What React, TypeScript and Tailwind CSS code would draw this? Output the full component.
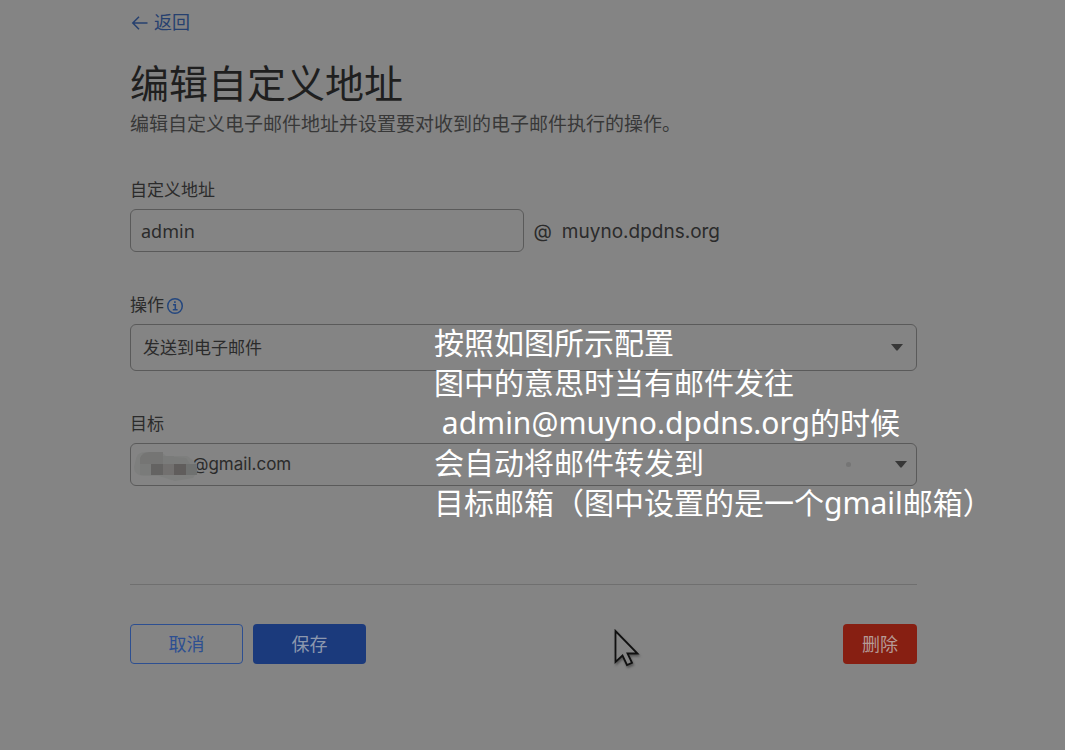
import React from "react";

const notes = [
  "按照如图所示配置",
  "图中的意思时当有邮件发往",
  " admin@muyno.dpdns.org的时候",
  "会自动将邮件转发到",
  "目标邮箱（图中设置的是一个gmail邮箱）",
];

function Caret() {
  return (
    <svg width="12" height="7" viewBox="0 0 12 7" fill="#373737" aria-hidden="true">
      <path d="M0 0h12L6.8 6.3q-.8.8-1.6 0z" />
    </svg>
  );
}

function App() {
  return (
    <div className="relative min-h-screen bg-[#848484] text-[#2b2b2b] font-[Inter,'Noto_Sans_CJK_SC',sans-serif]">
      <main className="ml-[130px] mr-[148px] pt-2.5 pb-20">
        <a href="#back" className="flex h-[26px] w-fit items-center gap-1.5 text-lg text-[#26406f]">
          <svg width="18" height="16" viewBox="0 0 18 16" fill="none" stroke="currentColor" strokeWidth="1.5" aria-hidden="true">
            <path d="M17.5 8H3M9 1.8 2.8 8 9 14.2" />
          </svg>
          返回
        </a>

        <h1 className="mt-5 text-[39px] leading-[56px] text-[#1f1f1f]">编辑自定义地址</h1>
        <p className="text-[19px] leading-[26px] whitespace-nowrap text-[#383838]">
          编辑自定义电子邮件地址并设置要对收到的电子邮件执行的操作。
        </p>

        {/* Form fields */}
        <form className="mt-[41px] flex flex-col gap-[42px]">
          <div>
            <label htmlFor="address" className="mb-1.5 flex h-6 items-center text-[17px]">
              自定义地址
            </label>
            <div className="flex items-baseline">
              <input
                id="address"
                type="text"
                defaultValue="admin"
                className="h-[43px] w-1/2 rounded-md border border-[#5a5a5a] px-2.5 font-['Noto_Sans'] text-lg"
              />
              <span className="ml-2.5 text-[19px]">@</span>
              <span className="ml-2.5 text-[19px]">muyno.dpdns.org</span>
            </div>
          </div>

          <div>
            <div className="mb-1.5 flex h-6 items-center text-[17px]">
              <label htmlFor="action">操作</label>
              <svg width="18" height="18" viewBox="0 0 18 18" fill="none" stroke="#24477f" strokeWidth="1.5" className="ml-0.5" aria-hidden="true">
                <circle cx="9" cy="9" r="7.3" />
                <path d="M7 7.8h2.3v5M6.8 12.8h4.8" />
                <path d="M8.1 5.1h1.6" strokeWidth="1.8" />
              </svg>
            </div>
            <div className="relative">
              <select
                id="action"
                className="h-[47px] w-full appearance-none rounded-md border border-[#5a5a5a] px-3 pt-0.5 text-[17px]"
              >
                <option>发送到电子邮件</option>
              </select>
              <span className="pointer-events-none absolute inset-y-0 right-3.5 flex items-center">
                <Caret />
              </span>
            </div>
          </div>

          <div>
            <label htmlFor="target" className="mb-1.5 flex h-6 items-center text-[17px]">
              目标
            </label>
            <div className="relative">
              <select
                id="target"
                className="h-[43px] w-full appearance-none rounded-md border border-[#5a5a5a] pr-3 pl-[61px] text-[17px]"
              >
                <option>@gmail.com</option>
              </select>
              {/* Masked user name */}
              <svg width="66" height="32" viewBox="0 0 66 32" className="pointer-events-none absolute top-1.5 left-0.5" aria-hidden="true">
                <path d="M4 10Q5 3 14 3h15l5 4h21l7 5 4 9-5 8-18 3-16-5H11Q2 26 2 18z" fill="#7e7f7e" />
                <path d="M8 9q2-6 10-6h13v12H8z" fill="#757574" />
                <path d="M31 7h11v8H31zM8 15h11v11H8zM42 15V8l12 1 4 6z" fill="#7a7b7a" />
                <path d="M19 15h12v11H19z" fill="#646362" />
                <path d="M31 15h11v11H31z" fill="#72706f" />
                <path d="M42 15h12v11H42z" fill="#605d5c" />
                <path d="M54 15h11v11H54z" fill="#6f7170" />
              </svg>
              <span className="pointer-events-none absolute inset-y-0 right-2.5 flex items-center">
                <span className="mr-11 h-[5px] w-[5px] rounded-full bg-[#757575]" />
                <Caret />
              </span>
            </div>
          </div>
        </form>

        <hr className="mt-[98px] border-[#6f6f6f]" />

        {/* Actions */}
        <div className="mt-[39px] flex gap-2.5">
          <button type="button" className="h-10 w-[113px] rounded border border-[#2d4f91] pt-0.5 text-lg leading-6 text-[#2d4f91]">
            取消
          </button>
          <button type="button" className="h-10 w-[113px] rounded bg-[#1b3a7c] pt-0.5 text-lg leading-6 text-[#8d98ae]">
            保存
          </button>
          <button type="button" className="ml-auto h-10 w-[74px] rounded bg-[#871f12] pt-0.5 text-lg leading-6 text-[#b59a96]">
            删除
          </button>
        </div>
      </main>

      {/* Annotation laid over the form */}
      <div className="pointer-events-none absolute top-[323px] left-[434px] font-['Noto_Sans','Noto_Sans_CJK_SC',sans-serif] text-3xl leading-10 whitespace-pre text-white">
        {notes.map((line) => (
          <p key={line}>{line}</p>
        ))}
      </div>

      {/* Mouse pointer */}
      <svg width="30" height="42" viewBox="0 0 30 42" className="pointer-events-none absolute top-[628px] left-[613px] drop-shadow-[1px_2px_1px_#555555]" aria-hidden="true">
        <path
          d="M2.5 3v31l7-6.500 4.500 9.500 5-2.200-4.500-9.300h10z"
          fill="#848484"
          stroke="#101010"
          strokeWidth="1.8"
        />
      </svg>
    </div>
  );
}

export default App;
